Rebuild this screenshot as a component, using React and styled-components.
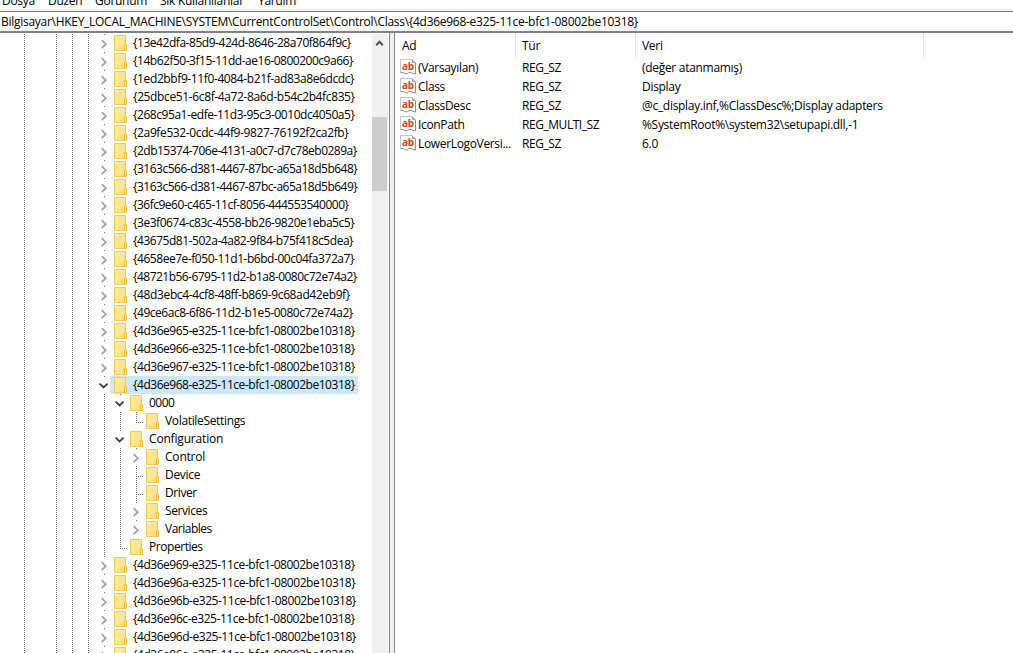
import React from 'react';
import styled, { createGlobalStyle } from 'styled-components';

const MENU = [
  { label: 'Dosya', width: 46 },
  { label: 'Düzen', width: 47 },
  { label: 'Görünüm', width: 65 },
  { label: 'Sık Kullanılanlar', width: 98 },
  { label: 'Yardım', width: 50 },
];

const key = (name, spacing = -0.48) => ({ name, spacing, cells: ['closed'] });

// one entry per visible line, cells run from the class level inwards
const TREE = [
  key('{13e42dfa-85d9-424d-8646-28a70f864f9c}', -0.46),
  key('{14b62f50-3f15-11dd-ae16-0800200c9a66}'),
  key('{1ed2bbf9-11f0-4084-b21f-ad83a8e6dcdc}', -0.39),
  key('{25dbce51-6c8f-4a72-8a6d-b54c2b4fc835}', -0.37),
  key('{268c95a1-edfe-11d3-95c3-0010dc4050a5}', -0.45),
  key('{2a9fe532-0cdc-44f9-9827-76192f2ca2fb}', -0.38),
  key('{2db15374-706e-4131-a0c7-d7c78eb0289a}', -0.51),
  key('{3163c566-d381-4467-87bc-a65a18d5b648}', -0.5),
  key('{3163c566-d381-4467-87bc-a65a18d5b649}', -0.5),
  key('{36fc9e60-c465-11cf-8056-444553540000}', -0.51),
  key('{3e3f0674-c83c-4558-bb26-9820e1eba5c5}', -0.46),
  key('{43675d81-502a-4a82-9f84-b75f418c5dea}', -0.47),
  key('{4658ee7e-f050-11d1-b6bd-00c04fa372a7}', -0.46),
  key('{48721b56-6795-11d2-b1a8-0080c72e74a2}', -0.53),
  key('{48d3ebc4-4cf8-48ff-b869-9c68ad42eb9f}', -0.38),
  key('{49ce6ac8-6f86-11d2-b1e5-0080c72e74a2}'),
  key('{4d36e965-e325-11ce-bfc1-08002be10318}'),
  key('{4d36e966-e325-11ce-bfc1-08002be10318}'),
  key('{4d36e967-e325-11ce-bfc1-08002be10318}'),
  { name: '{4d36e968-e325-11ce-bfc1-08002be10318}', cells: ['open'], spacing: -0.48, selected: true },
  { name: '0000', cells: ['line', 'open'], spacing: -0.5 },
  { name: 'VolatileSettings', cells: ['line', 'line', 'end'], spacing: -0.34 },
  { name: 'Configuration', cells: ['line', 'open'], spacing: -0.18 },
  { name: 'Control', cells: ['line', 'line', 'closed'], spacing: -0.2 },
  { name: 'Device', cells: ['line', 'line', 'tee'], spacing: -0.3 },
  { name: 'Driver', cells: ['line', 'line', 'tee'], spacing: -0.4 },
  { name: 'Services', cells: ['line', 'line', 'closed'], spacing: -0.4 },
  { name: 'Variables', cells: ['line', 'line', 'closed'], spacing: -0.5 },
  { name: 'Properties', cells: ['line', 'end'], spacing: -0.45 },
  key('{4d36e969-e325-11ce-bfc1-08002be10318}'),
  key('{4d36e96a-e325-11ce-bfc1-08002be10318}', -0.46),
  key('{4d36e96b-e325-11ce-bfc1-08002be10318}', -0.46),
  key('{4d36e96c-e325-11ce-bfc1-08002be10318}', -0.45),
  key('{4d36e96d-e325-11ce-bfc1-08002be10318}', -0.46),
  key('{4d36e96e-e325-11ce-bfc1-08002be10318}'),
];

const ANCESTORS = ['line', 'empty', 'line', 'line', 'line'];

const VALUES = [
  { name: '(Varsayılan)', type: 'REG_SZ', data: '(değer atanmamış)' },
  { name: 'Class', type: 'REG_SZ', data: 'Display' },
  { name: 'ClassDesc', type: 'REG_SZ', data: '@c_display.inf,%ClassDesc%;Display adapters' },
  { name: 'IconPath', type: 'REG_MULTI_SZ', data: '%SystemRoot%\\system32\\setupapi.dll,-1' },
  { name: 'LowerLogoVersi...', type: 'REG_SZ', data: '6.0' },
];

const Guide = ({kind}) => (
  <Cell viewBox="0 0 16 18">
    {kind === 'line' || kind === 'tee' ? <Dots d="M8.5 0V18" /> : null}
    {kind === 'end' ? <Dots d="M8.5 0V10" /> : null}
    {kind === 'tee' || kind === 'end' ? <Dots d="M8 10.5H16" /> : null}
    {kind === 'closed' || kind === 'open' ? <Dots d="M8.5 0V1" /> : null}
    {kind === 'closed' ? <Chevron d="M5.7 6.2L9.7 10.2L5.7 14.2" $color="#a6a6a6" /> : null}
    {kind === 'open' ? <Chevron d="M3.6 7.6L7.6 11.4L11.6 7.6" $color="#404040" /> : null}
  </Cell>
);

const Folder = () => (
  <FolderIcon viewBox="0 0 16 18">
    <defs>
      <linearGradient id="paper" x1="0" y1="0" x2="1" y2="1">
        <stop offset="0" stopColor="#ffeca6" />
        <stop offset="1" stopColor="#ffdf7c" />
      </linearGradient>
    </defs>
    <path d="M2.5 1.5H13.5V16.5H2.5Z" fill="url(#paper)" stroke="#efcb57" />
    <path d="M12.5 16.5V10.5H14.5V16.5Z" fill="#ffe695" stroke="#e9bf3c" />
  </FolderIcon>
);

const StringIcon = () => (
  <ValueIcon viewBox="0 0 16 16">
    <path d="M0.5 0.5H12.5L15.5 3.5V15L13 14.5L11 13.5L9 13.5L7 15L4.5 14.5L3 13.5H0.5Z" fill="#fff" />
    <path d="M0.5 13.5V0.5H12" fill="none" stroke="#c4c4c4" />
    <path d="M12 0.5L15.5 4V15L13 14.5L11 13.5L9 13.5L7 15L4.5 14.5L3 13.5H0.5" fill="none" stroke="#8e8e8e" />
    <path d="M12.5 1V3.5H15" fill="none" stroke="#a0a0a0" />
    <IconText x="1.9" y="11">ab</IconText>
  </ValueIcon>
);

const App = () => (
  <Window>
    <GlobalStyle />
    <MenuBar>
      {MENU.map(item => (
        <MenuItem key={item.label} $width={item.width}>{item.label}</MenuItem>
      ))}
    </MenuBar>
    <AddressBar>
      {'Bilgisayar\\HKEY_LOCAL_MACHINE\\SYSTEM\\CurrentControlSet\\Control\\Class\\{4d36e968-e325-11ce-bfc1-08002be10318}'}
    </AddressBar>
    <Panes>
      <TreePane>
        <Tree>
          {TREE.map(row => (
            <TreeRow key={row.name}>
              {ANCESTORS.concat(row.cells).map((kind, i) => <Guide key={i} kind={kind} />)}
              <KeyLabel $selected={row.selected}>
                <Folder />
                <KeyName $spacing={row.spacing}>{row.name}</KeyName>
              </KeyLabel>
            </TreeRow>
          ))}
        </Tree>
        <ScrollBar>
          <ScrollArrow viewBox="0 0 16 17">
            <path d="M4.2 11.2L7.5 7.7L10.8 11.2" fill="none" stroke="#505050" strokeWidth="2" />
          </ScrollArrow>
          <ScrollThumb />
        </ScrollBar>
      </TreePane>
      <Splitter />
      <ListPane>
        <ListHeader>
          <HeaderCell $indent={7}>Ad</HeaderCell>
          <HeaderCell $indent={6}>Tür</HeaderCell>
          <HeaderCell $indent={6}>Veri</HeaderCell>
        </ListHeader>
        {VALUES.map(value => (
          <ListRow key={value.name}>
            <NameCell>
              <StringIcon />
              {value.name}
            </NameCell>
            <ListCell $spacing={-0.3}>{value.type}</ListCell>
            <ListCell>{value.data}</ListCell>
          </ListRow>
        ))}
      </ListPane>
    </Panes>
  </Window>
);

export default App;


const GlobalStyle = createGlobalStyle`
  body {
    margin: 0;
    background: #fff;
  }
`;

const Window = styled.div`
  display: flex;
  flex-direction: column;
  width: 1013px;
  height: 653px;
  overflow: hidden;
  background: #fff;
  color: #000;
  font-family: 'Open Sans', 'Noto Sans', sans-serif;
  font-size: 12px;
  letter-spacing: -0.28px;
  white-space: pre;
`;

const MenuBar = styled.div`
  display: flex;
  align-items: flex-end;
  height: 9px;
  padding-left: 2px;
  border-bottom: 2px solid #f0f0f0;
  flex-shrink: 0;
`;

const MenuItem = styled.div`
  width: ${({$width}) => $width}px;
  flex-shrink: 0;
  line-height: 16px;
`;

const AddressBar = styled.div`
  box-sizing: border-box;
  height: 22px;
  flex-shrink: 0;
  padding-left: 1px;
  border-top: 1px solid #7a7a7a;
  border-bottom: 2px solid #7f8388;
  line-height: 20px;
`;

const Panes = styled.div`
  display: flex;
  flex: 1;
  min-height: 0;
`;

const TreePane = styled.div`
  display: flex;
  box-sizing: border-box;
  width: 390px;
  padding: 1px 1px 0 0;
  border-right: 1px solid #828790;
`;

const Tree = styled.div`
  width: 372px;
  padding-left: 16px;
  box-sizing: border-box;
  overflow: hidden;
`;

const TreeRow = styled.div`
  display: flex;
  height: 18px;
`;

const Cell = styled.svg`
  width: 16px;
  height: 18px;
  flex-shrink: 0;
`;

const Dots = styled.path`
  fill: none;
  stroke: #707070;
  stroke-dasharray: 1 1;
  shape-rendering: crispEdges;
`;

const Chevron = styled.path`
  fill: none;
  stroke: ${({$color}) => $color};
  stroke-width: 1.9;
`;

const KeyLabel = styled.div`
  display: flex;
  margin-left: -2px;
  padding-left: 2px;
  padding-right: 3px;
  background: ${({$selected}) => $selected ? '#cce8ff' : 'transparent'};
`;

const FolderIcon = styled.svg`
  width: 16px;
  height: 18px;
  margin-right: 5px;
  flex-shrink: 0;
`;

const KeyName = styled.span`
  line-height: 18px;
  letter-spacing: ${({$spacing}) => $spacing}px;
`;

const ScrollBar = styled.div`
  width: 16px;
  background: #f0f0f0;
`;

const ScrollArrow = styled.svg`
  display: block;
  width: 16px;
  height: 17px;
`;

const ScrollThumb = styled.div`
  width: 15px;
  height: 74px;
  margin-top: 66px;
  background: #cdcdcd;
`;

const Splitter = styled.div`
  width: 4px;
  background: #f0f0f0;
`;

const ListPane = styled.div`
  flex: 1;
  border-left: 1px solid #828790;
  padding-top: 1px;
`;

const columns = `
  display: grid;
  grid-template-columns: 121px 120px 288px;
`;

const ListHeader = styled.div`
  ${columns}
  height: 24px;
  margin-bottom: 1px;
`;

const HeaderCell = styled.div`
  padding-left: ${({$indent}) => $indent}px;
  border-right: 1px solid #e5e5e5;
  line-height: 24px;
`;

const ListRow = styled.div`
  ${columns}
  height: 19px;
  line-height: 18px;
`;

const ListCell = styled.div`
  padding-left: 6px;
  letter-spacing: ${({$spacing}) => $spacing ? $spacing - 0.15 : -0.3}px;
`;

const NameCell = styled.div`
  display: flex;
  padding-left: 5px;
  letter-spacing: -0.34px;
`;

const ValueIcon = styled.svg`
  width: 16px;
  height: 16px;
  margin-right: 2px;
  flex-shrink: 0;
`;

const IconText = styled.text`
  fill: #d0451f;
  font-family: 'Open Sans', sans-serif;
  font-size: 10px;
  font-weight: 700;
  letter-spacing: -0.3px;
`;
